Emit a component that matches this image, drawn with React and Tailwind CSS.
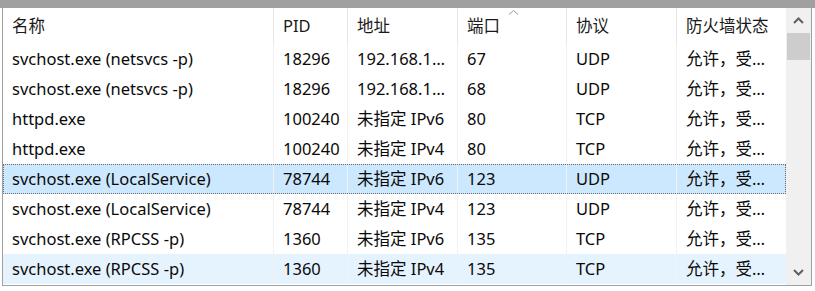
import React from "react";

const cols = [270, 74, 110, 109, 110, 110];
const headers = ["名称", "PID", "地址", "端口", "协议", "防火墙状态"];
const rows = [
  ["svchost.exe (netsvcs -p)", "18296", "192.168.1…", "67", "UDP", "允许，受…"],
  ["svchost.exe (netsvcs -p)", "18296", "192.168.1…", "68", "UDP", "允许，受…"],
  ["httpd.exe", "100240", "未指定 IPv6", "80", "TCP", "允许，受…"],
  ["httpd.exe", "100240", "未指定 IPv4", "80", "TCP", "允许，受…"],
  ["svchost.exe (LocalService)", "78744", "未指定 IPv6", "123", "UDP", "允许，受…"],
  ["svchost.exe (LocalService)", "78744", "未指定 IPv4", "123", "UDP", "允许，受…"],
  ["svchost.exe (RPCSS -p)", "1360", "未指定 IPv6", "135", "TCP", "允许，受…"],
  ["svchost.exe (RPCSS -p)", "1360", "未指定 IPv4", "135", "TCP", "允许，受…"],
];

const font = { fontFamily: '"Noto Sans", "Noto Sans CJK SC", sans-serif' };

export default function App() {
  return (
    <div className="w-[815px] h-[291px] bg-white overflow-hidden" style={font}>
      <div className="h-[8px] bg-[#a0a0a0]" />
      <div className="ml-[2px] w-[810px] h-[278px] border-x border-b border-[#a0a0a0] flex">
        <div className="w-[783px] flex flex-col relative">
          {/* header */}
          <div className="flex h-[36px] text-[16.5px] text-[#1a1a1a] relative">
            {headers.map((h, i) => (
              <div
                key={i}
                className={
                  "h-full flex items-center pl-[9px] " +
                  (i > 0 ? "border-l border-[#e5e5e5]" : "")
                }
                style={{ width: cols[i] }}
              >
                {h}
              </div>
            ))}
            <svg className="absolute left-[505px] top-[1px]" width="11" height="7" viewBox="0 0 11 7">
              <path d="M1 5.5 L5.5 1.5 L10 5.5" fill="none" stroke="#9a9a9a" strokeWidth="1" />
            </svg>
          </div>
          {/* rows */}
          <div className="flex flex-col text-[16.5px] text-[#0a0a0a]">
            {rows.map((r, ri) => {
              const sel = ri === 4;
              const hov = ri === 7;
              return (
                <div
                  key={ri}
                  className={
                    "flex h-[30px] " +
                    (sel
                      ? "bg-[#cce8ff] outline outline-1 outline-dotted outline-[#6b6b6b] -outline-offset-1"
                      : hov
                      ? "bg-[#e5f3ff]"
                      : "")
                  }
                >
                  {r.map((c, ci) => (
                    <div
                      key={ci}
                      className={
                        "h-full flex items-center whitespace-nowrap overflow-hidden pl-[9px] " +
                        (ci > 0 ? "border-l border-[#f2f2f2]" : "")
                      }
                      style={{ width: cols[ci] }}
                    >
                      {c}
                    </div>
                  ))}
                </div>
              );
            })}
          </div>
        </div>
        {/* scrollbar */}
        <div className="w-[25px] bg-[#f0f0f0] flex flex-col">
          <div className="h-[25px] flex items-center justify-center">
            <svg width="11" height="7" viewBox="0 0 11 7">
              <path d="M1 6 L5.5 1.5 L10 6" fill="none" stroke="#606060" strokeWidth="2" />
            </svg>
          </div>
          <div className="h-[27px] mx-[1px] bg-[#cdcdcd]" />
          <div className="flex-1" />
          <div className="h-[25px] flex items-center justify-center">
            <svg width="11" height="7" viewBox="0 0 11 7">
              <path d="M1 1 L5.5 5.5 L10 1" fill="none" stroke="#606060" strokeWidth="2" />
            </svg>
          </div>
        </div>
      </div>
    </div>
  );
}
